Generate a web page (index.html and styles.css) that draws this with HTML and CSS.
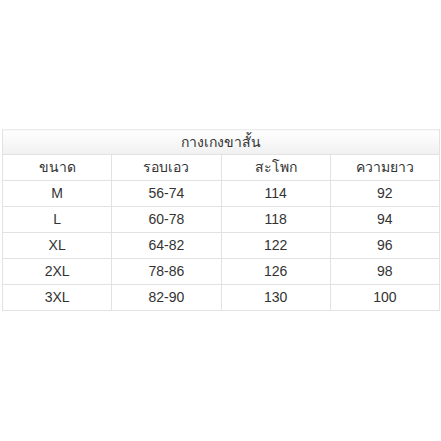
FILE: index.html
```html
<!DOCTYPE html>
<html lang="th">
<head>
<meta charset="utf-8">
<link rel="stylesheet" href="styles.css">
</head>
<body>
<div class="page">
  <table class="size-table">
    <thead>
      <tr class="title-row"><th colspan="4">กางเกงขาสั้น</th></tr>
      <tr class="head-row"><th>ขนาด</th><th>รอบเอว</th><th>สะโพก</th><th>ความยาว</th></tr>
    </thead>
    <tbody>
      <tr><td>M</td><td>56-74</td><td>114</td><td>92</td></tr>
      <tr><td>L</td><td>60-78</td><td>118</td><td>94</td></tr>
      <tr><td>XL</td><td>64-82</td><td>122</td><td>96</td></tr>
      <tr><td>2XL</td><td>78-86</td><td>126</td><td>98</td></tr>
      <tr><td>3XL</td><td>82-90</td><td>130</td><td>100</td></tr>
    </tbody>
  </table>
</div>
</body>
</html>
```
FILE: styles.css
```css
html, body {
  margin: 0;
  padding: 0;
  background: #ffffff;
}
.page {
  padding: 129px 0 0 2px;
  font-family: "Liberation Sans", Arial, sans-serif;
  color: #333333;
}
.size-table {
  border-collapse: collapse;
  width: 438px;
  table-layout: fixed;
  font-size: 14px;
}
.size-table th,
.size-table td {
  border: 1px solid #e2e2e6;
  text-align: center;
  font-weight: normal;
  padding: 0;
  height: 25px;
  line-height: 25px;
}
.title-row th {
  height: 24px;
  line-height: 24px;
  background: linear-gradient(#ffffff, #f0f0f0);
  border-top-color: #ececec;
}
```
